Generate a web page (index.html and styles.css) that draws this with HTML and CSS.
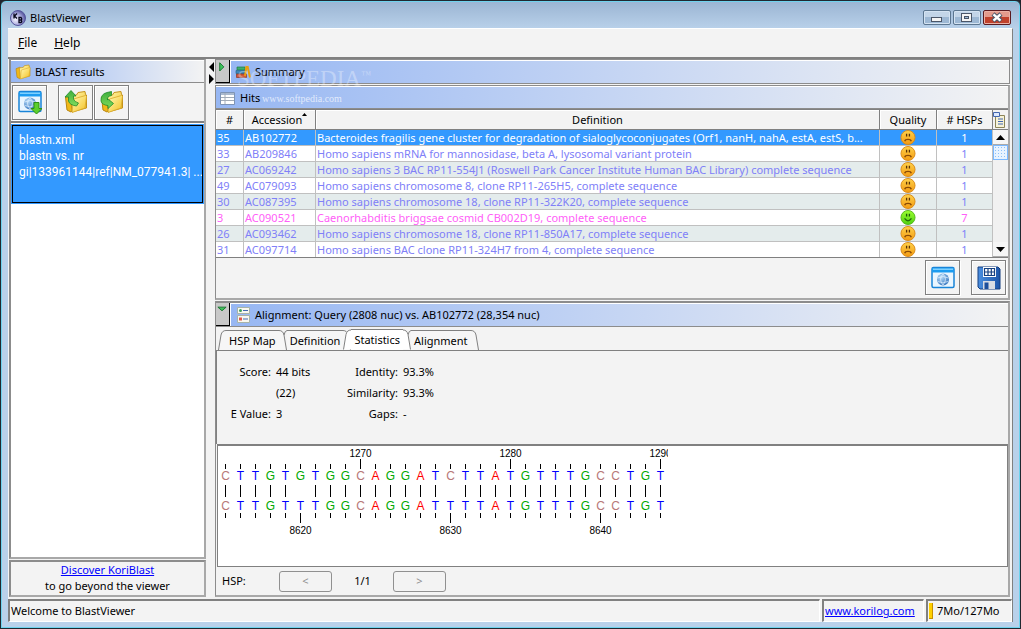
FILE: index.html
```html
<!DOCTYPE html>
<html lang="en">
<head>
<meta charset="utf-8">
<title>BlastViewer</title>
<link rel="stylesheet" href="styles.css">
</head>
<body>
<svg class="defs" aria-hidden="true">
  <defs>
    <linearGradient id="gOrange" x1="0" y1="0" x2="0" y2="1"><stop offset="0" stop-color="#ffd24a"/><stop offset="1" stop-color="#f39a12"/></linearGradient>
    <linearGradient id="gGreen" x1="0" y1="0" x2="0" y2="1"><stop offset="0" stop-color="#9cff30"/><stop offset="1" stop-color="#4fd010"/></linearGradient>
    <linearGradient id="gFolder" x1="0" y1="0" x2="1" y2="1"><stop offset="0" stop-color="#fffab8"/><stop offset="1" stop-color="#f4c020"/></linearGradient>
    <linearGradient id="gArrow" x1="0" y1="0" x2="0" y2="1"><stop offset="0" stop-color="#3fae3c"/><stop offset="1" stop-color="#7fdc5c"/></linearGradient>
    <radialGradient id="gGlobe" cx=".35" cy=".3" r=".8"><stop offset="0" stop-color="#b8dcf8"/><stop offset="1" stop-color="#2f70bc"/></radialGradient>
    <radialGradient id="gLogo" cx=".35" cy=".6" r=".7"><stop offset="0" stop-color="#f4f4ff"/><stop offset=".55" stop-color="#a8a8dc"/><stop offset="1" stop-color="#45458f"/></radialGradient>
    <linearGradient id="gDisk" x1="0" y1="0" x2="1" y2="0"><stop offset="0" stop-color="#4b8fe0"/><stop offset="1" stop-color="#1d55a8"/></linearGradient>
  </defs>
  <symbol id="sad" viewBox="0 0 16 16">
    <circle cx="8" cy="8" r="7.5" fill="url(#gOrange)" stroke="#d98a18"/>
    <path d="M6.5 4v3M9.500 4v3" stroke="#5a3205" stroke-width="1.4"/>
    <path d="M4.500 12Q5 10 8 10T11.500 12" fill="none" stroke="#8a4a06" stroke-width="1.400"/>
  </symbol>
  <symbol id="happy" viewBox="0 0 16 16">
    <circle cx="8" cy="8" r="7.500" fill="url(#gGreen)" stroke="#55b41c"/>
    <path d="M6.500 4v3M9.500 4v3" stroke="#1f5a08" stroke-width="1.400"/>
    <path d="M4.300 9Q8 14 11.700 9" fill="none" stroke="#1f6a08" stroke-width="1.300"/>
  </symbol>
  <symbol id="browser" viewBox="0 0 24 24">
    <rect x="1" y="1.500" width="22" height="20" rx="1.500" fill="#eaf6ff" stroke="#1884d8" stroke-width="1.500"/>
    <path d="M1 2h22v4.500H1z" fill="#1c9cf0"/><path d="M2 2.500h20v1.500H2z" fill="#7fd0ff"/>
    <circle cx="12" cy="13.500" r="6" fill="url(#gGlobe)"/>
    <path d="M6.500 12q5.500-3 11 0M6.800 15.500q5 2.500 10.400 0M12 8q-5 5 0 11M12 8q5 5 0 11" fill="none" stroke="#e4f2ff" stroke-width=".7"/>
  </symbol>
  <symbol id="folder" viewBox="0 0 24 24">
    <path d="M1.500 7L7 5l2 1.500V20l-2 2-4-2z" fill="#f0b818" stroke="#b98510"/>
    <path d="M6.500 6l6-1 1.500-2.500 7-1 .500 3 1 .500v13L8 22z" fill="url(#gFolder)" stroke="#c4921a"/>
    <path d="M8 22.500L9.500 9l12-3.500 1 1L21 18z" fill="url(#gFolder)" stroke="#d8a828" stroke-width=".8"/>
  </symbol>
</svg>

<div class="window">
  <header class="titlebar">
    <svg class="logo" viewBox="0 0 16 16"><circle cx="8" cy="8" r="7.500" fill="url(#gLogo)" stroke="#55559c"/><path d="M4 3.500v5M7 3.500L4.500 6 7 8.500M9 7.500v5h2q1.500-1 0-2.500 1.500-1 0-2.500zM9 10h2" fill="none" stroke="#08081c" stroke-width="1.300"/></svg>
    <h1 class="title">BlastViewer</h1>
    <div class="winbtns">
      <button class="winbtn" aria-label="Minimize"><svg viewBox="0 0 26 13"><rect x="7.500" y="6.500" width="10" height="4" fill="#f4f4f4" stroke="#4b5668"/></svg></button>
      <button class="winbtn" aria-label="Maximize"><svg viewBox="0 0 26 13"><rect x="7.500" y="2.500" width="10" height="8" fill="#f4f4f4" stroke="#4b5668"/><rect x="10.500" y="5.500" width="4" height="2" fill="#9db9d6" stroke="#4b5668"/></svg></button>
      <button class="winbtn close" aria-label="Close"><svg viewBox="0 0 26 13"><path d="M9 3l8 7M17 3l-8 7" stroke="#4b5668" stroke-width="4.500"/><path d="M9.500 3.300l7 6.400M16.500 3.300l-7 6.400" stroke="#fff" stroke-width="2.500"/></svg></button>
    </div>
  </header>

  <div class="client">
    <nav class="menubar">
      <button class="menu"><u>F</u>ile</button>
      <button class="menu"><u>H</u>elp</button>
    </nav>

    <div class="main">
      <aside class="side">
        <section class="panel results">
          <h2 class="bar">
            <svg class="i16" viewBox="0 0 24 24"><use href="#folder"/></svg>BLAST results
          </h2>
          <div class="tools">
            <button class="tool first" aria-label="Load from web"><svg class="i24" viewBox="0 0 24 24"><use href="#browser"/><path d="M16 12.500h5v6h3l-5.500 5.500-5.500-5.500h3z" fill="#5ccf2c" stroke="#2e8e14"/></svg></button>
            <button class="tool" aria-label="Open file"><svg class="i24" viewBox="0 0 24 24"><use href="#folder"/><path d="M4.500 11V7H1l6-6.500L12 6H9.500v3q1 3 5 4l-2 3q-7-1-8-5z" fill="url(#gArrow)" stroke="#1f8a2c" stroke-width=".8"/></svg></button>
            <button class="tool" aria-label="Reopen file"><svg class="i24" viewBox="0 0 24 24"><use href="#folder"/><path d="M1 11q-.500-7 6-8.500l4.500-1v4q-5 1-4 4.500v-1.500l6 5L8 18.500v-3q-6-.500-7-4.500z" fill="url(#gArrow)" stroke="#1f8a2c" stroke-width=".8"/></svg></button>
          </div>
          <ul class="list">
            <li class="job"><span>blastn.xml</span><span>blastn vs. nr</span><span>gi|133961144|ref|NM_077941.3| ...</span></li>
          </ul>
        </section>
        <div class="panel promo">
          <a href="#koriblast">Discover KoriBlast</a>
          <span>to go beyond the viewer</span>
        </div>
      </aside>

      <div class="splitter"><svg viewBox="0 0 6 24"><path d="M5 1v10L0 6zM0 13v10l5-5z"/></svg></div>

      <main class="content">
        <section class="strip">
          <button class="toggle" aria-label="Expand summary"><svg viewBox="0 0 12 24"><path d="M3.500 3v9L8 7.500z" fill="#3ec45c" stroke="#17702c"/></svg></button>
          <h2 class="bar">
            <svg class="i16" viewBox="0 0 16 16"><path d="M2 3h8v3H2z" fill="#3cb070" stroke="#217a44" stroke-width=".7"/><path d="M1 6.500h9v3H1z" fill="#3d86b8" stroke="#24688e" stroke-width=".7"/><path d="M1.500 10h10v3.500h-10z" fill="#d0563c" stroke="#8e3420" stroke-width=".7"/><path d="M11.500 2L10 12M12.500 2L15 13.500" stroke="#e8a010" stroke-width="2"/></svg>Summary
          </h2>
          <div class="mark"><b>SOFTPEDIA</b><sup>™</sup><i>www.softpedia.com</i></div>
        </section>

        <section class="panel hits">
          <h2 class="bar">
            <svg class="i16" viewBox="0 0 16 16"><path d="M.5 2.500h14v12H.5z" fill="#fff" stroke="#7d93b5"/><path d="M1 3h13v2H1z" fill="#a9b9cf"/><path d="M1 7.500h13M1 10.500h13M5 3v11" stroke="#a3acb8"/></svg>Hits
          </h2>
          <div class="grid">
            <div class="rows">
            <table class="table">
              <colgroup><col class="c-num"><col class="c-acc"><col><col class="c-qual"><col class="c-hsp"></colgroup>
              <thead><tr><th>#</th><th>Accession<svg class="sort" viewBox="0 0 5 3"><path d="M0 3L2.500 0 5 3z"/></svg></th><th>Definition</th><th>Quality</th><th># HSPs</th></tr></thead>
              <tbody>
                <tr class="sel"><td>35</td><td>AB102772</td><td>Bacteroides fragilis gene cluster for degradation of sialoglycoconjugates (Orf1, nanH, nahA, estA, estS, b...</td><td><svg class="face"><use href="#sad"/></svg></td><td>1</td></tr>
                <tr><td>33</td><td>AB209846</td><td>Homo sapiens mRNA for mannosidase, beta A, lysosomal variant protein</td><td><svg class="face"><use href="#sad"/></svg></td><td>1</td></tr>
                <tr><td>27</td><td>AC069242</td><td>Homo sapiens 3 BAC RP11-554J1 (Roswell Park Cancer Institute Human BAC Library) complete sequence</td><td><svg class="face"><use href="#sad"/></svg></td><td>1</td></tr>
                <tr><td>49</td><td>AC079093</td><td>Homo sapiens chromosome 8, clone RP11-265H5, complete sequence</td><td><svg class="face"><use href="#sad"/></svg></td><td>1</td></tr>
                <tr><td>30</td><td>AC087395</td><td>Homo sapiens chromosome 18, clone RP11-322K20, complete sequence</td><td><svg class="face"><use href="#sad"/></svg></td><td>1</td></tr>
                <tr class="good"><td>3</td><td>AC090521</td><td>Caenorhabditis briggsae cosmid CB002D19, complete sequence</td><td><svg class="face"><use href="#happy"/></svg></td><td>7</td></tr>
                <tr><td>26</td><td>AC093462</td><td>Homo sapiens chromosome 18, clone RP11-850A17, complete sequence</td><td><svg class="face"><use href="#sad"/></svg></td><td>1</td></tr>
                <tr><td>31</td><td>AC097714</td><td>Homo sapiens BAC clone RP11-324H7 from 4, complete sequence</td><td><svg class="face"><use href="#sad"/></svg></td><td>1</td></tr>
              </tbody>
            </table>
            </div>
            <div class="scroll">
              <button class="cols" aria-label="Choose columns"><svg viewBox="0 0 14 18"><path d="M2.500 4.500h9v12h-9z" fill="#f6f2d8" stroke="#8c8458"/><path d="M.5 1.500h6v4h-6z" fill="#dce8ff" stroke="#4468b0"/><path d="M5 8h5M5 10.500h5M5 13h5" stroke="#4468b0"/></svg></button>
              <button class="arrow" aria-label="Scroll up"><svg viewBox="0 0 9 5"><path d="M0 5L4.500 0 9 5z"/></svg></button>
              <div class="thumb"></div>
              <div class="track"></div>
              <button class="arrow" aria-label="Scroll down"><svg viewBox="0 0 9 5"><path d="M0 0L4.500 5 9 0z"/></svg></button>
            </div>
          </div>
          <div class="actions">
            <button class="tool" aria-label="View in browser"><svg class="i24" viewBox="0 0 24 24"><use href="#browser"/></svg></button>
            <button class="tool" aria-label="Save"><svg class="i24" viewBox="0 0 24 24"><path d="M1 1h20l2 2v20H3l-2-2z" fill="url(#gDisk)" stroke="#153f80"/><path d="M6 1h13v10H6z" fill="#fff"/><path d="M7.500 2.500h10v7h-10zM7.500 6h10M11 2.500v7M14.300 2.500v7" fill="none" stroke="#153f80" stroke-width="1.200"/><path d="M6 15h12v8H6z" fill="#d9dde4"/><path d="M7.500 16.500h4V23h-4z" fill="#1d4f9c"/></svg></button>
          </div>
        </section>

        <section class="panel align">
          <div class="strip inner">
            <button class="toggle" aria-label="Collapse alignment"><svg viewBox="0 0 12 24"><path d="M1.500 4.500h9L6 8.500z" fill="#3ec45c" stroke="#17702c"/></svg></button>
            <h2 class="bar">
              <svg class="i16" viewBox="0 0 16 16"><path d="M2.500.5h12v6h-12zM2.500 8.500h12v7h-12z" fill="#f8f8f0" stroke="#a8b4a8"/><circle cx="5.500" cy="3.500" r="1.500" fill="#3fa05c"/><path d="M4 10.500h3v3H4z" fill="#e05848"/><path d="M8 3.500h5M8 12h5" stroke="#4468b0"/></svg>Alignment: Query (2808 nuc) vs. AB102772 (28,354 nuc)
            </h2>
          </div>
          <div class="tabs" role="tablist">
            <button class="tab" role="tab"><svg class="cap" viewBox="0 0 8 20"><path d="M0 20L3 4Q4 .5 8 .5V20z" fill="#f6f6f6"/><path d="M.5 20L3 5Q4 .5 8 .5" fill="none" stroke="#808080"/></svg><span>HSP Map</span><svg class="cap" viewBox="0 0 8 20"><path d="M8 20L5 4Q4 .5 0 .5V20z" fill="#f6f6f6"/><path d="M7.500 20L5 5Q4 .5 0 .5" fill="none" stroke="#808080"/></svg></button>
            <button class="tab" role="tab"><svg class="cap" viewBox="0 0 8 20"><path d="M5 5Q6 .5 8 .5" fill="none" stroke="#808080"/></svg><span>Definition</span><svg class="cap" viewBox="0 0 8 20"><path d="M8 20L5 4Q4 .5 0 .5V20z" fill="#f6f6f6"/><path d="M7.500 20L5 5Q4 .5 0 .5" fill="none" stroke="#808080"/></svg></button>
            <button class="tab on" role="tab" aria-selected="true"><svg class="cap" viewBox="0 0 8 20"><path d="M0 20L3 4Q4 .5 8 .5V20z" fill="#fff"/><path d="M.5 20L3 5Q4 .5 8 .5" fill="none" stroke="#808080"/></svg><span>Statistics</span><svg class="cap" viewBox="0 0 8 20"><path d="M8 20L5 4Q4 .5 0 .5V20z" fill="#fff"/><path d="M7.500 20L5 5Q4 .5 0 .5" fill="none" stroke="#808080"/></svg></button>
            <button class="tab" role="tab"><svg class="cap" viewBox="0 0 8 20"><path d="M5 5Q6 .5 8 .5" fill="none" stroke="#808080"/></svg><span>Alignment</span><svg class="cap" viewBox="0 0 8 20"><path d="M8 20L5 4Q4 .5 0 .5V20z" fill="#f6f6f6"/><path d="M7.500 20L5 5Q4 .5 0 .5" fill="none" stroke="#808080"/></svg></button>
          </div>
          <div class="stats">
            <dl class="facts a"><dt>Score:</dt><dd>44 bits</dd><dt></dt><dd>(22)</dd><dt>E Value:</dt><dd>3</dd></dl>
            <dl class="facts b"><dt>Identity:</dt><dd>93.3%</dd><dt>Similarity:</dt><dd>93.3%</dd><dt>Gaps:</dt><dd>-</dd></dl>
          </div>
          <div class="sequence"><div class="bases" id="bases"></div></div>
          <div class="pager">
            <span class="label">HSP:</span>
            <button class="page" disabled>&lt;</button>
            <span class="count">1/1</span>
            <button class="page" disabled>&gt;</button>
          </div>
        </section>
      </main>
    </div>

    <footer class="status">
      <div class="cell grow">Welcome to BlastViewer</div>
      <div class="cell link"><a href="#korilog">www.korilog.com</a></div>
      <div class="cell mem"><span class="gauge"></span>7Mo/127Mo</div>
    </footer>
  </div>
</div>
<script src="script.js"></script>
</body>
</html>
```
FILE: styles.css
```css
* { box-sizing: border-box; }
body {
  margin: 0;
  height: 100vh;
  min-height: 600px;
  display: flex;
  background: #20242c;
  color: #000;
  font: 11px/16px "Noto Sans", "Open Sans", sans-serif;
}
h1, h2, ul, dl, dd { margin: 0; padding: 0; font: inherit; }
button { font: inherit; color: inherit; margin: 0; padding: 0; border: 0; background: none; }
svg { display: block; }
a { color: #00f; }
.defs { position: absolute; width: 0; height: 0; }

.window {
  flex: 1;
  min-width: 0;
  display: flex;
  flex-direction: column;
  padding: 1px 7px 6px;
  border: 1px solid #202830;
  border-radius: 6px 6px 0 0;
  box-shadow: inset 0 0 0 1px #6fd3ee;
  background: linear-gradient(#9ab4d2, #b9d1ea 28px);
}
.titlebar { height: 26px; display: flex; align-items: center; padding: 5px 2px 0 2px; }
.logo { width: 16px; height: 16px; margin-right: 4px; }
.title { flex: 1; }
.winbtns { display: flex; gap: 2px; }
.winbtn {
  width: 28px;
  height: 15px;
  border: 1px solid #5c7690;
  border-radius: 2px;
  box-shadow: inset 0 0 0 1px #d4e3f2;
  background: linear-gradient(#c3d5e8 50%, #9db8d4 50%);
}
.winbtn svg { width: 26px; height: 13px; }
.close { border-color: #5a1a20; box-shadow: inset 0 0 0 1px #eab0a4; background: linear-gradient(#e39a8c 50%, #c0412c 50%); }

.client {
  flex: 1;
  min-height: 0;
  display: flex;
  flex-direction: column;
  background: #f3f3f3;
  border-top: 1px solid #fff;
  border-right: 1px solid #808080;
}
.menubar { height: 30px; display: flex; gap: 17px; padding: 0 10px; border-bottom: 2px solid #808080; }
.menu { font-size: 12px; }
.main { flex: 1; min-height: 0; display: flex; padding: 0 2px 0 1px; }
.side { width: 197px; display: flex; flex-direction: column; gap: 1px; }

.panel { border: 2px solid #8c8c8c; border-right-color: #a8a8a8; border-bottom-color: #a8a8a8; background: #f3f3f3; }
.bar {
  height: 23px;
  display: flex;
  align-items: center;
  gap: 4px;
  padding-left: 4px;
  border-top: 1px solid #fff;
  border-bottom: 1px solid #8c8c8c;
  background: linear-gradient(90deg, #97b7f3, #f3f3f3);
}
.i16 { width: 16px; height: 16px; }
.i24 { width: 24px; height: 24px; }
.results { flex: 1; display: flex; flex-direction: column; border-top-width: 1px; }
.tools { height: 40px; display: flex; align-items: center; gap: 1px; padding-left: 1px; border-bottom: 2px solid #808080; }
.tool {
  width: 35px;
  height: 35px;
  display: grid;
  place-items: center;
  border: 1px solid #808080;
  box-shadow: inset 1px 1px #fff, 1px 1px #fff;
}
.tool.first { margin-right: 10px; }
.list { flex: 1; list-style: none; background: #fff; padding: 2px 1px; }
.job {
  height: 78px;
  display: flex;
  flex-direction: column;
  padding: 6px;
  border: 1px solid #000;
  outline: 1px solid #39f;
  background: #39f;
  color: #fff;
  font: 12px/16px Roboto, "Noto Sans", sans-serif;
  white-space: nowrap;
  overflow: hidden;
}
.promo { height: 37px; display: flex; flex-direction: column; align-items: center; }
.splitter { width: 9px; padding: 2px 0 2px 3px; }
.splitter svg { width: 6px; height: 24px; }

.content { flex: 1; min-width: 0; display: flex; flex-direction: column; gap: 1px; }
.strip { position: relative; display: flex; border: 1px solid #8c8c8c; }
.strip .bar { flex: 1; border-bottom: 0; border-left: 1px solid #fff; }
.strip.inner { border: 0; border-bottom: 1px solid #8c8c8c; }
.toggle { width: 14px; background: #c8c8c8; border-right: 1px solid #000; border-bottom: 1px solid #000; }
.toggle svg { width: 12px; height: 22px; }
.mark { position: absolute; left: 21px; top: 7px; font: 23px/24px "Liberation Serif", serif; color: #ffffff55; }
.mark b { font-weight: 400; }
.mark sup { font-size: 10px; vertical-align: 8px; line-height: 10px; }
.mark i { position: absolute; left: 25px; top: 26px; font: 10px/12px "Liberation Serif", serif; color: #ffffffb3; }

.hits { border-width: 1px 2px 2px 1px; }
.grid { display: flex; border-top: 1px solid #808080; border-bottom: 1px solid #808080; }
.rows { flex: 1; min-width: 0; }
.table { width: 100%; table-layout: fixed; border-collapse: separate; border-spacing: 0; }
.c-num { width: 28px; }
.c-acc { width: 72px; }
.c-qual { width: 57px; }
.c-hsp { width: 56px; }
th { height: 20px; padding: 1px 0 0; font-weight: 400; text-align: center; border-right: 1px solid #808080; border-bottom: 1px solid #808080; box-shadow: inset 1px 1px #fff; }
.sort { display: inline-block; width: 5px; height: 3px; vertical-align: 8px; }
td { height: 16px; padding: 0 1px; line-height: 15px; color: #8080f8; background: #fff; border-right: 1px solid #c0c0c0; border-bottom: 1px solid #c0c0c0; white-space: nowrap; overflow: hidden; }
tbody tr:nth-child(odd) td { background: #e4ecec; }
tbody tr.sel td { background: #39f; color: #fff; }
tbody tr.good td { color: #ff60f8; }
td:nth-child(n+4) { text-align: center; }
tr:last-child td { border-bottom: 0; height: 15px; }
.face { width: 16px; height: 15px; margin: 0 auto; }
.scroll { width: 15px; display: flex; flex-direction: column; }
.cols { height: 20px; border-bottom: 1px solid #808080; }
.cols svg { width: 14px; height: 18px; }
.arrow { height: 15px; display: grid; place-items: center; border-bottom: 1px solid #aaa; background: #f6f6f6; }
.arrow svg { width: 9px; height: 5px; }
.thumb { height: 15px; border: 1px solid #7ab8ff; background: radial-gradient(#8cc0f8 35%, #e8f3ff 40%) 0 0 / 3px 3px; }
.track { flex: 1; background: #f1f1f1; }
.actions { display: flex; justify-content: flex-end; gap: 11px; padding: 2px 2px 3px; }

.align { flex: 1; min-height: 0; display: flex; flex-direction: column; border-width: 2px 2px 2px 1px; }
.tabs { display: flex; align-items: flex-end; height: 24px; padding-left: 2px; border-bottom: 1px solid #808080; }
.tab { display: flex; height: 20px; margin-right: -8px; }
.tab span { border-top: 1px solid #808080; padding: 2px 3px 0; background: #f6f6f6; height: 20px; }
.cap { width: 8px; height: 20px; flex: none; }
.tab.on { position: relative; z-index: 1; height: 21px; }
.tab.on span { background: #fff; height: 21px; }
.tab.on .cap { height: 21px; }
.stats { height: 93px; display: flex; padding: 10px 12px; border-left: 1px solid #808080; }
.facts { display: grid; grid-auto-rows: 21px; align-items: center; column-gap: 5px; align-content: start; }
.facts dt { text-align: right; }
.a { grid-template-columns: 42px 60px; }
.b { grid-template-columns: 62px 60px; }
.sequence { flex: 1; min-height: 0; background: #fff; border: 1px solid #808080; border-top-width: 2px; margin-left: 1px; overflow: hidden; padding-top: 3px; }
.bases { display: flex; width: 450px; overflow: hidden; }
.col { width: 15px; flex: none; display: flex; flex-direction: column; align-items: center; font: 12px/14px "Liberation Sans", Arial, sans-serif; }
.num { height: 10px; line-height: 10px; font-size: 10px; }
.tick { width: 1px; height: 10px; display: flex; }
.tick::before { content: ""; width: 1px; height: 5px; background: #000; }
.tick.top { align-items: flex-end; }
.tick.major::before { height: 10px; }
.tick + .num { margin-top: 3px; }
.pair { width: 1px; height: 12px; margin: 2px 0; }
.match { background: #000; }
.A { color: #f00; }
.C { color: #b87878; }
.G { color: #00a800; }
.T { color: #00f; }
.pager { height: 28px; display: flex; align-items: center; padding-left: 6px; }
.label { width: 57px; }
.page { width: 53px; height: 21px; border: 1px solid #909090; border-radius: 3px; color: #909090; }
.count { width: 61px; text-align: center; }

.status { height: 23px; display: flex; gap: 2px; margin-top: 2px; }
.cell { border-top: 2px solid #808080; border-left: 2px solid #808080; border-bottom: 1px solid #fff; border-right: 1px solid #fff; line-height: 20px; padding-left: 1px; }
.grow { flex: 1; }
.link { width: 102px; }
.mem { width: 86px; display: flex; gap: 4px; align-items: center; }
.gauge { width: 4px; height: 16px; background: #ffd000; border-right: 1px solid #c89000; border-bottom: 1px solid #c89000; }
```
FILE: script.js
```js
const query = "CTTGTGTGGCAGGATCTTATGTTTGCCTGT";
const hit = "CTTGTTTGGCAGGATTTTATGTTTGCCTGT";
const queryStart = 1261;
const hitStart = 8615;
const host = document.getElementById("bases");

function add(parent, className, text) {
  const el = document.createElement("span");
  el.className = className;
  el.textContent = text || "";
  parent.append(el);
}

for (let i = 0; i < query.length; i++) {
  const col = document.createElement("div");
  const q = queryStart + i;
  const h = hitStart + i;
  col.className = "col";
  add(col, "num", q % 10 ? "" : String(q));
  add(col, q % 10 ? "tick top" : "tick top major");
  add(col, query[i], query[i]);
  add(col, query[i] === hit[i] ? "pair match" : "pair");
  add(col, hit[i], hit[i]);
  add(col, h % 10 ? "tick" : "tick major");
  add(col, "num", h % 10 ? "" : String(h));
  host.append(col);
}
```
